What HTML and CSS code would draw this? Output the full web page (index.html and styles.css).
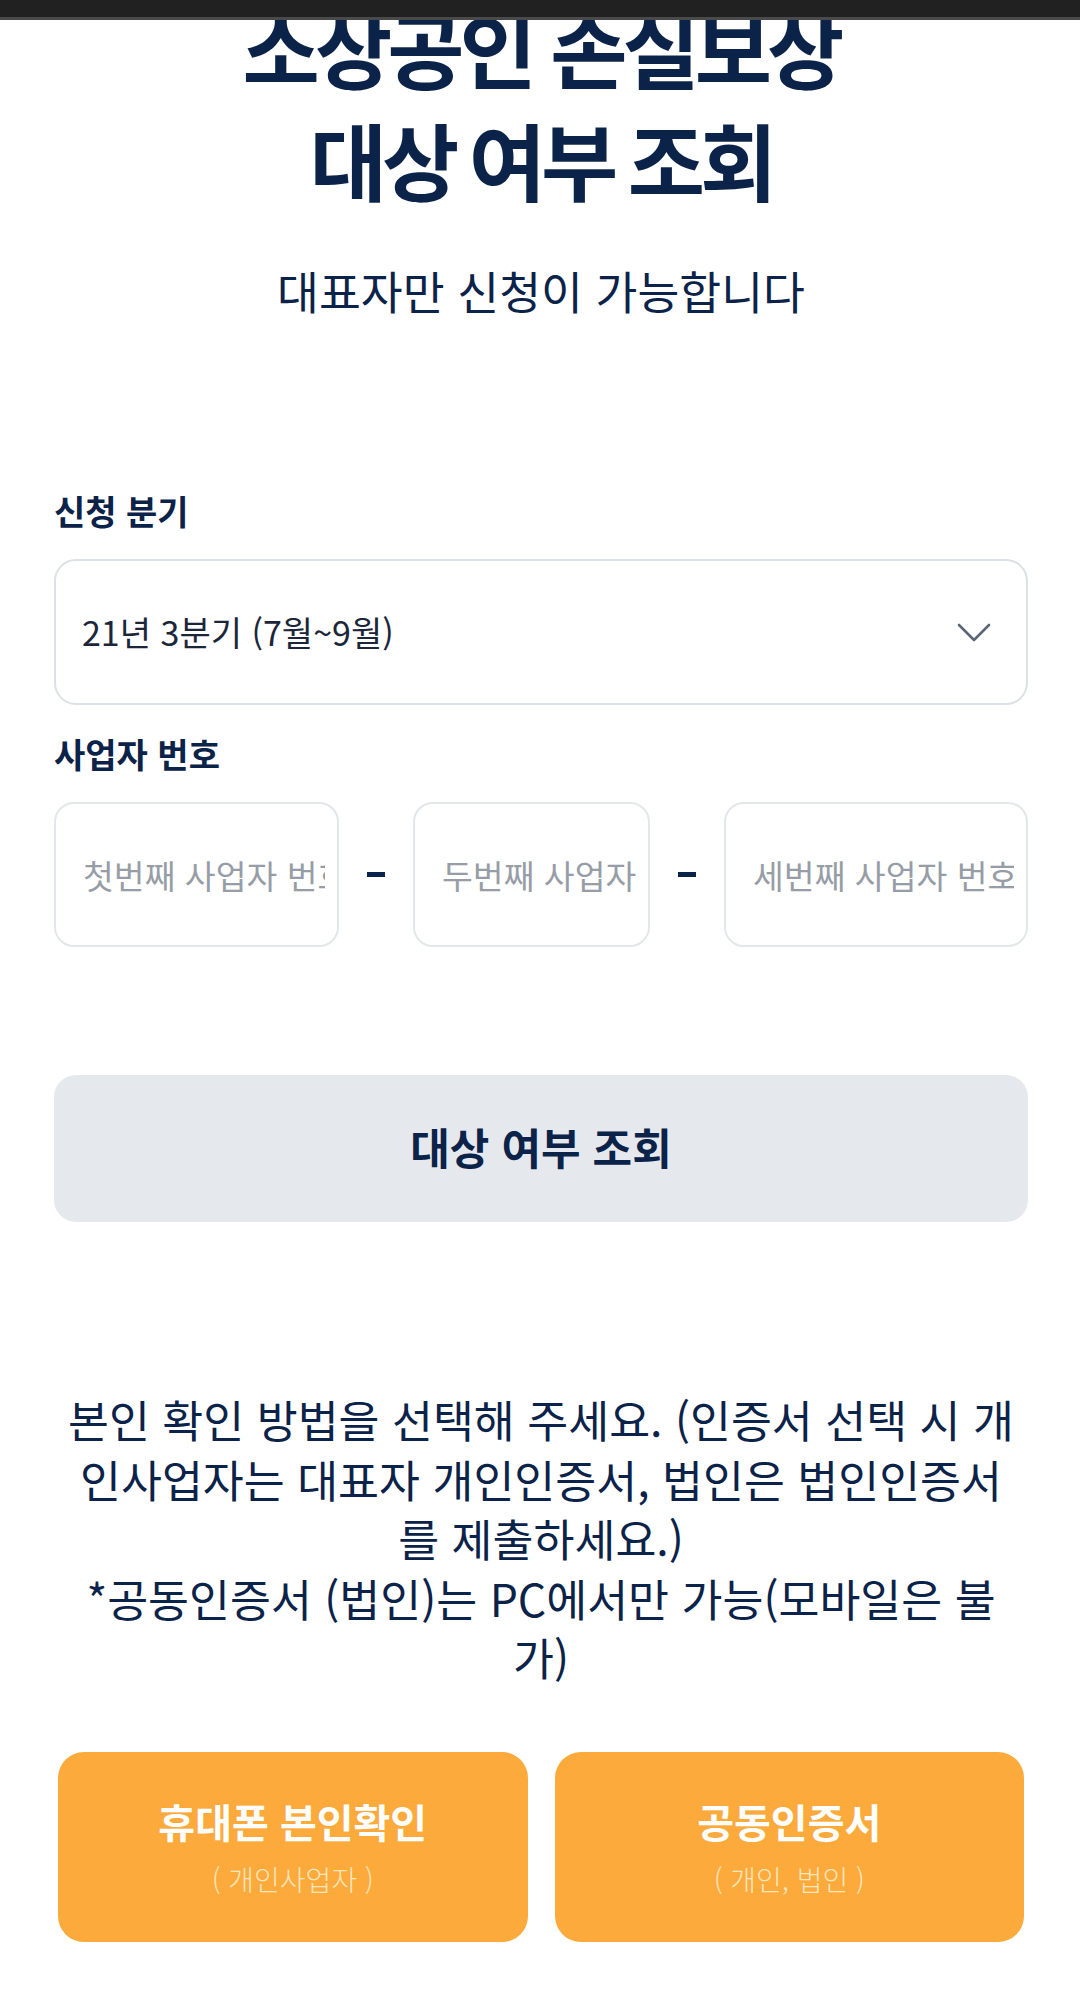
FILE: index.html
```html
<!DOCTYPE html>
<html lang="ko">
<head>
<meta charset="utf-8">
<title>소상공인 손실보상 대상 여부 조회</title>
<link rel="stylesheet" href="styles.css">
</head>
<body>
<div class="topbar"></div>
<main class="page">
  <h1 class="title">
    <span class="title-l1">소상공인 손실보상</span>
    <span class="title-l2">대상 여부 조회</span>
  </h1>
  <p class="subtitle">대표자만 신청이 가능합니다</p>

  <label class="label label-first">신청 분기</label>
  <div class="select">
    <span class="select-text">21년 3분기 (7월~9월)</span>
    <svg class="chevron" width="34" height="19" viewBox="0 0 34 19" aria-hidden="true">
      <path d="M2 2 L17 17 L32 2" fill="none" stroke="#5b6677" stroke-width="2.6" stroke-linecap="round" stroke-linejoin="round"/>
    </svg>
  </div>

  <label class="label label-second">사업자 번호</label>
  <div class="biz-row">
    <input class="biz-input" type="text" placeholder="첫번째 사업자 번호">
    <span class="dash"></span>
    <input class="biz-input" type="text" placeholder="두번째 사업자 번호">
    <span class="dash"></span>
    <input class="biz-input" type="text" placeholder="세번째 사업자 번호">
  </div>

  <button class="check-btn" type="button">대상 여부 조회</button>

  <p class="notice">본인 확인 방법을 선택해 주세요. (인증서 선택 시 개<br>인사업자는 대표자 개인인증서, 법인은 법인인증서<br>를 제출하세요.)<br>*공동인증서 (법인)는 PC에서만 가능(모바일은 불<br>가)</p>

  <div class="auth-row">
    <button class="auth-btn" type="button">
      <span class="auth-title">휴대폰 본인확인</span>
      <span class="auth-sub">( 개인사업자 )</span>
    </button>
    <button class="auth-btn" type="button">
      <span class="auth-title">공동인증서</span>
      <span class="auth-sub">( 개인, 법인 )</span>
    </button>
  </div>
</main>
</body>
</html>
```
FILE: styles.css
```css
* { box-sizing: border-box; }

html, body {
  margin: 0;
  padding: 0;
  background: #ffffff;
}

body {
  font-family: "Noto Sans CJK KR", "Noto Sans", sans-serif;
  color: #0b2249;
  overflow: hidden;
}

.topbar {
  position: fixed;
  top: 0;
  left: 0;
  right: 0;
  height: 20px;
  background: #212121;
  border-bottom: 3px solid #4a4a4a;
  z-index: 10;
}

.page {
  padding: 0 52px 0 54px;
  display: flex;
  flex-direction: column;
}

.title {
  margin: -2px 0 0 0;
  text-align: center;
  font-weight: 700;
  color: #0b2249;
}

.title-l1 {
  display: block;
  font-size: 84px;
  line-height: 98px;
  letter-spacing: -5px;
}

.title-l2 {
  display: block;
  font-size: 84px;
  line-height: 126px;
  letter-spacing: -5px;
  word-spacing: -4px;
}

.subtitle {
  margin: 38px 0 0 0;
  text-align: center;
  font-size: 45.5px;
  line-height: 60px;
  font-weight: 400;
  color: #0b2249;
}

.label {
  display: block;
  font-size: 34px;
  line-height: 46px;
  font-weight: 700;
  color: #0b2249;
}

.label-first { margin-top: 168px; }
.label-second { margin-top: 26px; }

.select {
  margin-top: 25px;
  height: 146px;
  border: 2px solid #dce1e7;
  border-radius: 22px;
  display: flex;
  align-items: center;
  justify-content: space-between;
  padding: 0 35px 0 26px;
}

.select-text {
  font-size: 34px;
  line-height: 46px;
  color: #1b2639;
}

.chevron { display: block; }

.biz-row {
  margin-top: 25px;
  display: grid;
  grid-template-columns: 285px 18px 237px 18px 1fr;
  column-gap: 28px;
  align-items: center;
}

.biz-input {
  height: 145px;
  width: 100%;
  border: 2px solid #e3e6ea;
  border-radius: 20px;
  padding: 0 12px 0 27px;
  font-family: "Noto Sans CJK KR", "Noto Sans", sans-serif;
  font-size: 33.5px;
  color: #1b2639;
  background: #fff;
  outline: none;
}

.biz-input::placeholder {
  color: #979da6;
  opacity: 1;
}

.dash {
  display: block;
  height: 5px;
  background: #0b2249;
}

.check-btn {
  margin-top: 128px;
  height: 147px;
  width: 100%;
  border: none;
  border-radius: 22px;
  background: #e5e9ee;
  font-family: "Noto Sans CJK KR", "Noto Sans", sans-serif;
  font-size: 43px;
  font-weight: 700;
  color: #0b2249;
  padding: 0 0 6px 0;
}

.notice {
  margin: 167px 0 0 0;
  text-align: center;
  font-size: 44.5px;
  line-height: 59.6px;
  color: #0b2249;
  white-space: nowrap;
}

.auth-row {
  margin-top: 65px;
  padding: 0 4px;
  display: grid;
  grid-template-columns: 1fr 1fr;
  column-gap: 27px;
}

.auth-btn {
  height: 190px;
  border: none;
  border-radius: 26px;
  background: #fbaa3b;
  display: flex;
  flex-direction: column;
  align-items: center;
  justify-content: center;
  gap: 15px;
  padding: 0;
  font-family: "Noto Sans CJK KR", "Noto Sans", sans-serif;
}

.auth-title {
  font-size: 40px;
  line-height: 50px;
  font-weight: 700;
  color: #ffffff;
}

.auth-sub {
  font-size: 28px;
  line-height: 36px;
  font-weight: 300;
  color: #ffe6bd;
}
```
